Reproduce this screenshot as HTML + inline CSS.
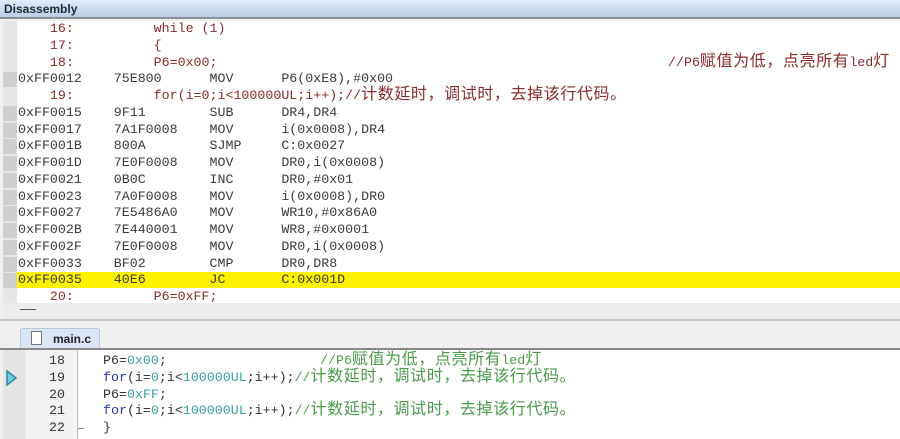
<!DOCTYPE html>
<html><head><meta charset="utf-8"><style>
*{margin:0;padding:0;box-sizing:border-box}
body{width:900px;height:439px;overflow:hidden;background:#f0f0f0;position:relative;font-family:"Liberation Mono","Noto Sans CJK SC",monospace;font-size:13.3px}
.t{position:absolute;white-space:pre;line-height:16px;height:16px}
.c{font-family:"Noto Sans CJK SC",sans-serif;font-size:16px;letter-spacing:0.6px;line-height:0}
.title{position:absolute;left:0;top:0;width:900px;height:19px;background:linear-gradient(#e3ecf7,#b9cde6);border-bottom:2px solid #8a8f96;font-family:"Liberation Sans",sans-serif;font-size:12px;font-weight:bold;color:#1e2a3a;padding:2px 4px}
.pane{position:absolute;left:3px;top:21px;width:897px;height:282px;background:#fff;border-left:2px solid #777}
.gut{position:absolute;left:3px;top:21px;width:14px;height:282px;background:#e6e6e6}
.a{color:#3a3a3a}.s{color:#8a2a2a}
.g{color:#4a9a4a}.k{color:#2a3aa8}.n{color:#3aa0a0}.d{color:#333}
</style></head><body>
<div class="title">Disassembly</div>
<div class="pane"></div>
<div class="gut"></div>
<div style="position:absolute;left:17px;top:272px;width:883px;height:16px;background:#fff200"></div>
<div style="position:absolute;left:3px;top:303px;width:897px;height:16px;background:#ececec"></div>
<div style="position:absolute;left:20px;top:309px;width:16px;height:1px;background:#555"></div>
<div style="position:absolute;left:0;top:319px;width:900px;height:2px;background:#c8c8c8"></div>
<div id="dis"></div>
<div style="position:absolute;left:20px;top:328px;width:80px;height:21px;background:#dce5f3;border:1px solid #b8c6dc;border-bottom:none;border-radius:3px 3px 0 0"></div>
<div style="position:absolute;left:31px;top:331px;width:11px;height:14px;background:#fff;border:1px solid #777"></div>
<div class="t" style="left:53px;top:331px;font-family:'Liberation Sans',sans-serif;font-size:12px;font-weight:bold;color:#223">main.c</div>
<div style="position:absolute;left:0;top:348px;width:900px;height:2px;background:#888"></div>
<div style="position:absolute;left:3px;top:350px;width:897px;height:89px;background:#fff"></div>
<div style="position:absolute;left:3px;top:350px;width:22px;height:89px;background:#e4e4e4"></div>
<div style="position:absolute;left:25px;top:350px;width:53px;height:89px;background:#f2f2f2;border-right:1px solid #bbb"></div>
<svg style="position:absolute;left:6px;top:370px" width="12" height="16"><path d="M1 1 L10 8 L1 15 Z" fill="#6fd0e0" stroke="#2a8aa0" stroke-width="1.5"/></svg>
<div id="ed"></div>
<script>
function cj(s){return s.replace(/([\u3000-\u9fff\uff00-\uffef]+)/g,'<span class="c">$1</span>');}
var R=[
['s','    16:          while (1)'],
['s','    17:          {'],
['s','    18:          P6=0x00;'],
['a','0xFF0012    75E800      MOV      P6(0xE8),#0x00'],
['s','    19:          for(i=0;i&lt;100000UL;i++);//计数延时，调试时，去掉该行代码。'],
['a','0xFF0015    9F11        SUB      DR4,DR4'],
['a','0xFF0017    7A1F0008    MOV      i(0x0008),DR4'],
['a','0xFF001B    800A        SJMP     C:0x0027'],
['a','0xFF001D    7E0F0008    MOV      DR0,i(0x0008)'],
['a','0xFF0021    0B0C        INC      DR0,#0x01'],
['a','0xFF0023    7A0F0008    MOV      i(0x0008),DR0'],
['a','0xFF0027    7E5486A0    MOV      WR10,#0x86A0'],
['a','0xFF002B    7E440001    MOV      WR8,#0x0001'],
['a','0xFF002F    7E0F0008    MOV      DR0,i(0x0008)'],
['a','0xFF0033    BF02        CMP      DR0,DR8'],
['a','0xFF0035    40E6        JC       C:0x001D'],
['s','    20:          P6=0xFF;']];
var h='';
R.forEach(function(r,i){
 var top=21+i*16.75;
 if(r[0]=='a') h+='<div style="position:absolute;left:3px;top:'+(top+1)+'px;width:14px;height:15px;background:#cfcfcf"></div>';
 h+='<div class="t '+r[0]+'" style="left:18px;top:'+top+'px">'+cj(r[1])+'</div>';
});
h+='<div class="t s" style="left:668px;top:'+(21+2*16.75)+'px">'+cj('//P6赋值为低，点亮所有led灯')+'</div>';
document.getElementById('dis').innerHTML=h;
var E=[
['18','<span class="d">P6=</span><span class="n">0x00</span><span class="d">;</span>'],
['19','<span class="k">for</span><span class="d">(i=</span><span class="n">0</span><span class="d">;i&lt;</span><span class="n">100000UL</span><span class="d">;i++);</span><span class="g">//计数延时，调试时，去掉该行代码。</span>'],
['20','<span class="d">P6=</span><span class="n">0xFF</span><span class="d">;</span>'],
['21','<span class="k">for</span><span class="d">(i=</span><span class="n">0</span><span class="d">;i&lt;</span><span class="n">100000UL</span><span class="d">;i++);</span><span class="g">//计数延时，调试时，去掉该行代码。</span>'],
['22','<span class="d">}</span>']];
h='';
E.forEach(function(r,i){
 var top=353+i*16.75;
 h+='<div class="t d" style="left:49px;top:'+top+'px">'+r[0]+'</div>';
 h+='<div class="t" style="left:103px;top:'+top+'px">'+cj(r[1])+'</div>';
});
h+='<div class="t g" style="left:320px;top:353px">'+cj('//P6赋值为低，点亮所有led灯')+'</div>';
h+='<div style="position:absolute;left:78px;top:428px;width:6px;height:1px;background:#888"></div>';
document.getElementById('ed').innerHTML=h;
</script>
</body></html>
